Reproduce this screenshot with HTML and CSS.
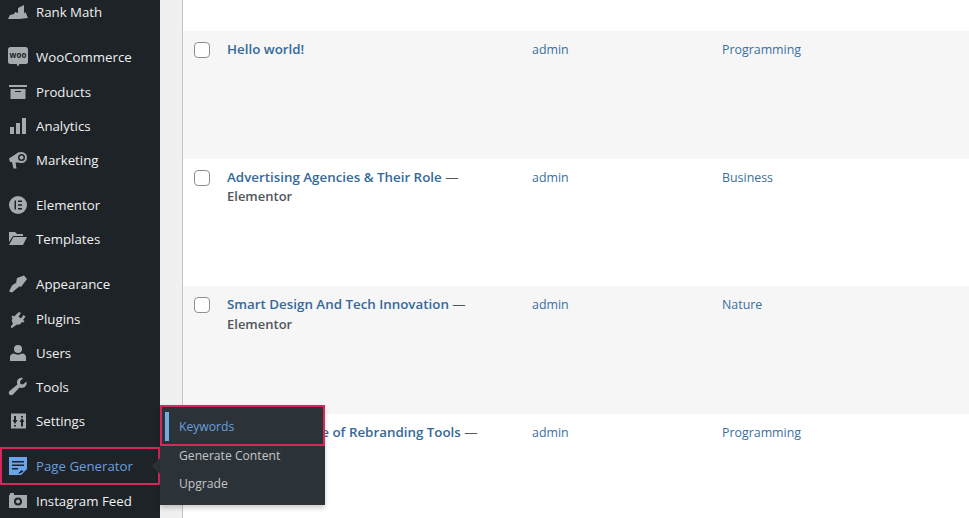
FILE: index.html
```html
<!DOCTYPE html>
<html lang="en">
<head>
<meta charset="utf-8">
<title>Posts</title>
<link rel="stylesheet" href="styles.css">
</head>
<body>
<div class="page">
  <nav class="menu">
    <a class="item"><svg class="ic" viewBox="0 0 20 20"><path d="M0 17l2-4 4-1 1-2 3 1V6l6-3v9l1-2 1 1 1 3 1 2-9 1z"/></svg><span>Rank Math</span></a>
    <a class="item sep"><svg class="ic" viewBox="0 0 20 20"><rect y="0" width="20" height="17" rx="2.500"/><path d="M8 16h4l-2 3.500z"/><text class="woo" x="10" y="11">woo</text></svg><span>WooCommerce</span></a>
    <a class="item"><svg class="ic" viewBox="0 0 20 20"><path d="M1 3h18v2H1zM2.500 7h15v10h-15z"/><path class="cut" d="M7 9h6v1H7z"/></svg><span>Products</span></a>
    <a class="item"><svg class="ic" viewBox="0 0 20 20"><path d="M2 11h4v7H2zM8 7h4v11H8zM14 2h4v16h-4z"/></svg><span>Analytics</span></a>
    <a class="item"><svg class="ic" viewBox="0 0 20 20"><path d="M1 8.500L11 2c2.500 2 3.500 6 3 10.500L7.500 12.500l1 6H5.500l-1.500-6.500H2z"/><circle cx="13.500" cy="7.500" r="5.500"/><circle class="cut" cx="13.500" cy="7.500" r="3.500"/><circle cx="13.500" cy="7.500" r="2"/></svg><span>Marketing</span></a>
    <a class="item sep"><svg class="ic" viewBox="0 0 20 20"><circle cx="10" cy="10" r="9"/><path class="cut" d="M6.500 5.500h1.500v9H6.500zM10 5.500h4v1.500h-4zM10 9.200h4v1.500h-4zM10 13h4v1.500h-4z"/></svg><span>Elementor</span></a>
    <a class="item"><svg class="ic" viewBox="0 0 20 20"><path d="M1 3h6l2 2h6v2H5L1 13zM5.500 8H19l-4 8H1z"/></svg><span>Templates</span></a>
    <a class="item sep"><svg class="ic" viewBox="0 0 20 20"><path d="M9 4l7-2.500 3 3.500-6 8-2-1-2-1-1-2zM7.500 9l4 3.500-1.500 1-6 5-3-1 3-6z"/></svg><span>Appearance</span></a>
    <a class="item"><svg class="ic" viewBox="0 0 20 20"><path d="M11 3l2 1-2.500 3.500L13 9.500 15.500 6l2 1.500L15 11l1.500 1-1 1.500L14 13c-1 2-3 3-5 2.500L4 19l-1.500-1L5 14.500c-1.500-2-1.500-3.500-.5-5L3.500 8l1-1.500 1.500 1z"/></svg><span>Plugins</span></a>
    <a class="item"><svg class="ic" viewBox="0 0 20 20"><circle cx="10" cy="6" r="4"/><path d="M2 18v-4c0-2 2-3.500 4-3.500 2 1.500 6 1.500 8 0 2 0 4 1.500 4 3.500v4z"/></svg><span>Users</span></a>
    <a class="item"><svg class="ic" viewBox="0 0 20 20"><path d="M18.500 4.500l-3.500 3-2.500-.5-.5-2.500 3-3.500c-3-.8-6 1-6 4 0 1 0 1.500.4 2.500L1.500 14c-1 1-1 2.500 0 3.500s2.500 1 3.500 0l6.500-7c3.500 1.500 8-1 7-6z"/></svg><span>Tools</span></a>
    <a class="item"><svg class="ic" viewBox="0 0 20 20"><path fill-rule="evenodd" d="M3 2.500h15v15H3zM6 5v4H4.500L7 13l2.500-4H8V5zM6 14v1.500h2V14zM13 5v1.500h2V5zM14 7l-2.500 4H13v4.500h2V11h1.500z"/></svg><span>Settings</span></a>
    <a class="item sep current"><svg class="ic" viewBox="0 0 20 20"><path fill-rule="evenodd" d="M1 1h18v12l-6 6H1zM4 5v1.500h12V5zM4 8.500V10h12V8.500zM4 12v1.500h6V12zM13.500 14l-3 3 .5 1 4.500-2.500z"/></svg><span>Page Generator</span></a>
    <a class="item"><svg class="ic" viewBox="0 0 20 20"><path fill-rule="evenodd" d="M2 2h4v2h13v13H1V4h1zM10 6.500a4 4 0 100 8 4 4 0 000-8z"/><circle cx="10" cy="10.500" r="2"/></svg><span>Instagram Feed</span></a>
  </nav>
  <main class="content">
    <div class="table">
      <div class="row spacer"></div>
      <div class="row alt">
        <span class="check"></span>
        <div class="title"><a class="strong">Hello world!</a></div>
        <a class="cell">admin</a>
        <a class="cell">Programming</a>
      </div>
      <div class="row">
        <span class="check"></span>
        <div class="title"><a class="strong">Advertising Agencies &amp; Their Role</a> — <b>Elementor</b></div>
        <a class="cell">admin</a>
        <a class="cell">Business</a>
      </div>
      <div class="row alt">
        <span class="check"></span>
        <div class="title"><a class="strong">Smart Design And Tech Innovation</a> — <b>Elementor</b></div>
        <a class="cell">admin</a>
        <a class="cell">Nature</a>
      </div>
      <div class="row">
        <span class="check"></span>
        <div class="title"><a class="strong">The Importance of Rebranding Tools</a> — <b>Elementor</b></div>
        <a class="cell">admin</a>
        <a class="cell">Programming</a>
      </div>
    </div>
  </main>
  <span class="arrow"></span>
  <ul class="flyout">
    <li class="sub active">Keywords</li>
    <li class="sub">Generate Content</li>
    <li class="sub">Upgrade</li>
  </ul>
</div>
</body>
</html>
```

FILE: styles.css
```css
html, body {
  margin: 0;
  padding: 0;
  height: 100%;
  overflow: hidden;
}
body {
  font-family: "Open Sans", "Noto Sans", "Liberation Sans", sans-serif;
  background: #f0f0f1;
}
.page {
  position: relative;
  display: flex;
  width: 969px;
  height: 518px;
  overflow: hidden;
}
.menu {
  flex: 0 0 160px;
  margin-top: -4.9px;
  height: 530px;
  background: #1d2327;
  display: flex;
  flex-direction: column;
}
.item {
  flex: 0 0 34.3px;
  box-sizing: border-box;
  display: flex;
  align-items: center;
  gap: 8px;
  padding-left: 8px;
  color: #f0f0f1;
  font-size: 13.25px;
}
.sep {
  margin-top: 10.67px;
}
.ic {
  flex: 0 0 20px;
  width: 20px;
  height: 20px;
  fill: #a7aaad;
}
.ic .cut {
  fill: #1d2327;
}
.woo {
  font-size: 8px;
  font-weight: 700;
  text-anchor: middle;
  fill: #1d2327;
}
.current {
  position: relative;
  color: #6b9fdc;
}
.current::after {
  content: "";
  position: absolute;
  inset: -2px 0 -1px 0;
  border: 2px solid #d6285a;
}
.current .ic {
  fill: #6aa5ec;
}
.content {
  flex: 1;
  margin-left: 22px;
  border-left: 1px solid #c3c4c7;
  min-width: 0;
}
.table {
  display: flex;
  flex-direction: column;
  background: #fff;
}
.row {
  flex: 0 0 127.67px;
  box-sizing: border-box;
  display: grid;
  grid-template-columns: 44px 305px 190px 1fr;
  padding-top: 9px;
  align-items: start;
  background: #fff;
  font-size: 12.4px;
  line-height: 19.5px;
  color: #50575e;
}
.spacer {
  flex-basis: 31px;
  padding: 0;
}
.alt {
  background: #f6f6f6;
}
.check {
  box-sizing: border-box;
  width: 16px;
  height: 16px;
  margin: 2px 0 0 11px;
  background: #fff;
  border: 1px solid #8c8f94;
  border-radius: 4px;
}
.title {
  width: 255px;
  font-size: 13.35px;
  font-weight: 500;
}
.strong {
  color: #34699a;
  font-weight: 600;
}
.title b {
  font-size: 13px;
  font-weight: 600;
  color: #50575e;
}
.cell {
  color: #3a6f9f;
}
.arrow {
  position: absolute;
  left: 152px;
  top: 458px;
  width: 0;
  height: 0;
  border: 8px solid transparent;
  border-left-width: 0;
  border-right-color: #2c3338;
}
.flyout {
  position: absolute;
  left: 160px;
  top: 405px;
  width: 165px;
  margin: 0;
  padding: 0 0 7px;
  list-style: none;
  background: #2c3338;
  box-shadow: 0 3px 5px rgba(0, 0, 0, 0.2);
}
.sub {
  box-sizing: border-box;
  height: 28.5px;
  padding-left: 19px;
  display: flex;
  align-items: center;
  font-size: 12.15px;
  color: #c3c4c7;
}
.active {
  position: relative;
  height: 41px;
  padding-top: 1px;
  color: #6b9fdc;
  outline: 2px solid #d6285a;
  outline-offset: -2px;
}
.active + .sub {
  margin-top: -5px;
}
.active::before {
  content: "";
  position: absolute;
  left: 5px;
  top: 7px;
  bottom: 5px;
  width: 4px;
  background: #72aee6;
}
```
